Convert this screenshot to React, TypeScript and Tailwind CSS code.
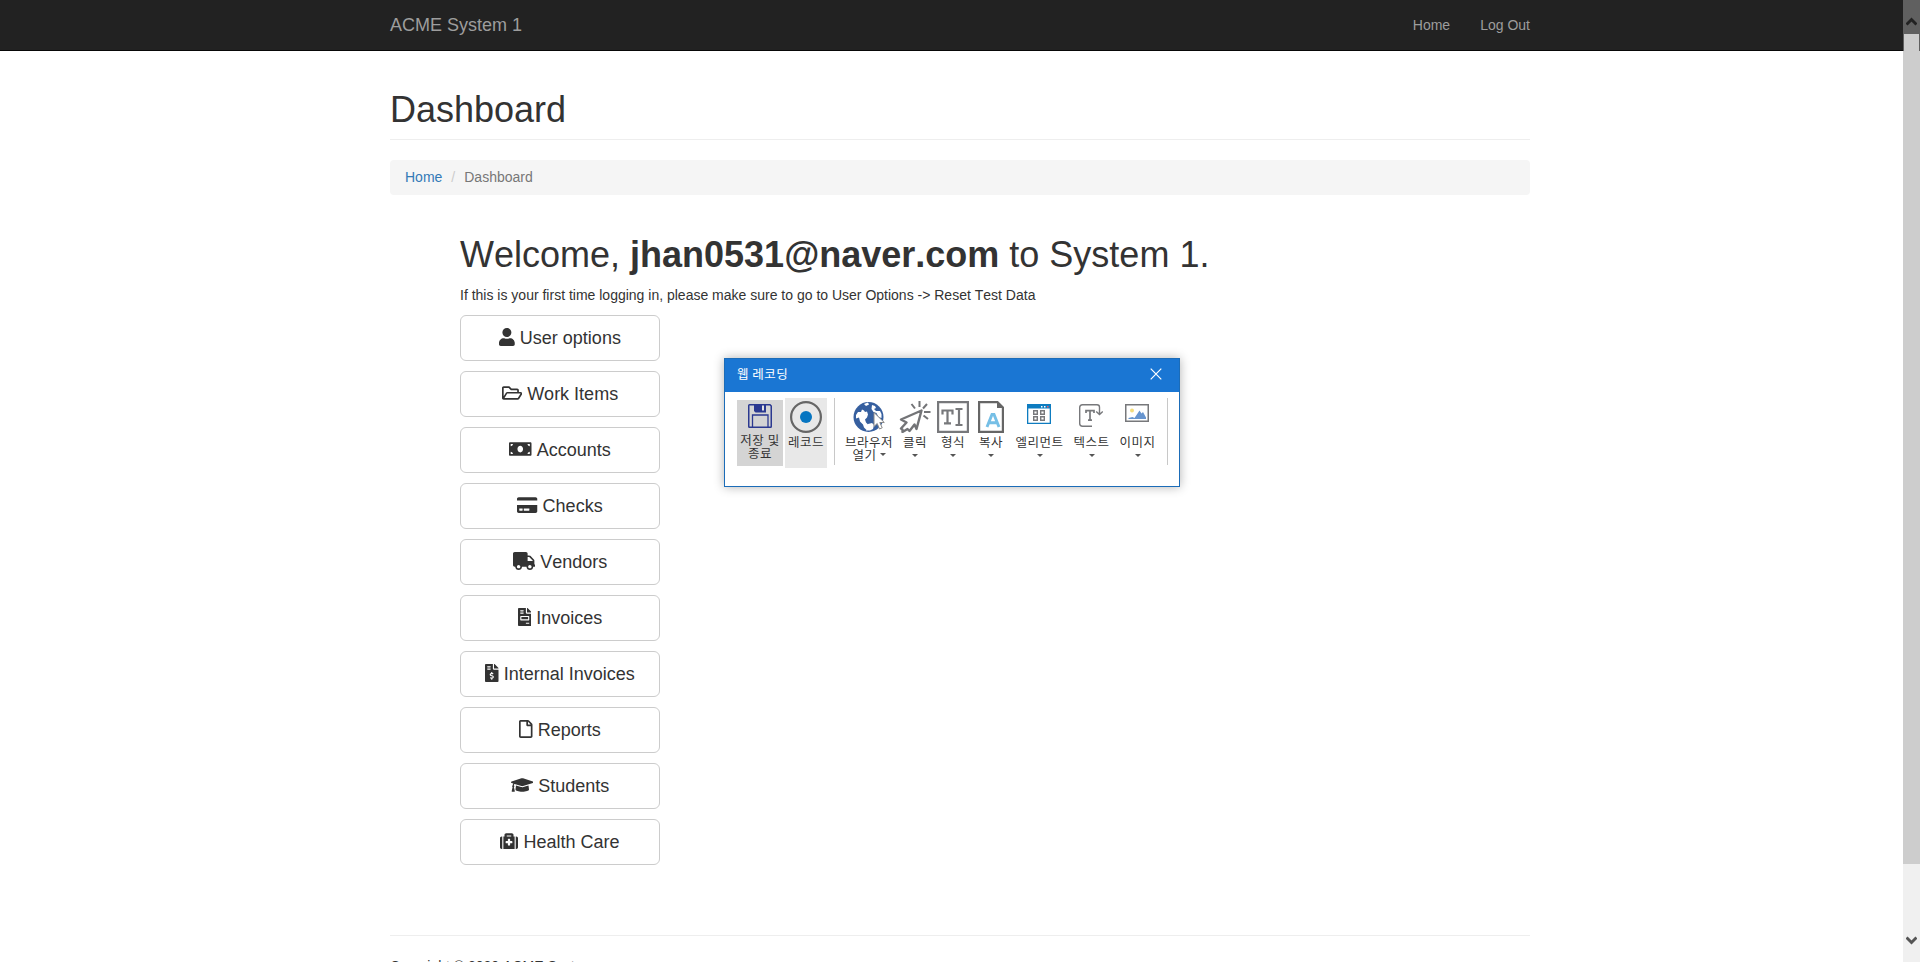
import React from "react";
import {
  FaUser, FaRegFolderOpen, FaMoneyBill, FaCreditCard, FaTruck, FaFileInvoice,
  FaFileInvoiceDollar, FaRegFile, FaGraduationCap, FaMedkit,
} from "react-icons/fa";
import type { IconType } from "react-icons";

const menu: { icon: IconType; label: string; w: string }[] = [
  { icon: FaUser, label: "User options", w: "w-[15.75px]" },
  { icon: FaRegFolderOpen, label: "Work Items", w: "w-[20.25px]" },
  { icon: FaMoneyBill, label: "Accounts", w: "w-[22.5px]" },
  { icon: FaCreditCard, label: "Checks", w: "w-[20.25px]" },
  { icon: FaTruck, label: "Vendors", w: "w-[22.5px]" },
  { icon: FaFileInvoice, label: "Invoices", w: "w-[13.5px]" },
  { icon: FaFileInvoiceDollar, label: "Internal Invoices", w: "w-[13.5px]" },
  { icon: FaRegFile, label: "Reports", w: "w-[13.5px]" },
  { icon: FaGraduationCap, label: "Students", w: "w-[22.5px]" },
  { icon: FaMedkit, label: "Health Care", w: "w-[18px]" },
];

const SaveIcon = () => (
  <svg width="24" height="24" viewBox="0 0 24 24" fill="none">
    <path d="M1.5 .75H22l1.250 1.250V22.500q0 .75-.75.75h-21q-.75 0-.75-.75V1.500q0-.75.75-.75z" stroke="#2b3990" strokeWidth="1.500" />
    <path d="M6 0h12v8.500H7.500L6 7z" fill="#2b3990" />
    <path d="M14 1.500h2v5h-2z" fill="#e4e4e4" />
    <path d="M4.500 23.500V11h15.500v12.500" stroke="#2b3990" strokeWidth="1.300" />
  </svg>
);

const RecordIcon = () => (
  <svg width="32" height="32" viewBox="0 0 32 32" fill="none">
    <circle cx="16" cy="16" r="14.900" stroke="#666" strokeWidth="2.200" />
    <circle cx="16" cy="16" r="6" fill="#0675c1" />
  </svg>
);

const BrowserIcon = () => (
  <svg width="32" height="32" viewBox="0 0 32 32" fill="none">
    <circle cx="15.500" cy="16" r="15" fill="#365f9f" />
    <path d="M3 14l2-3 3 0 1-2.500 2 1 1 1.500 2-.5 1 3-1 3-2 2 1 3 2 2 1 3-1 2-2 0-2-2-1-3-3-3-1-4-3 1z" fill="#fff" />
    <path d="M11 3l4-1.500 1 2-3 1.500zM19 4l3 1 1 2-2 1 2 2 4 0 1.500 3v4l-3-1-2-4-3-1-2-3z" fill="#fff" />
    <path d="M15 23l4-1 2 2-1 4-3 1.500-4 0z" fill="#fff" />
    <path d="M21 11.500v14l3.200-3 2.300 5.500 2.700-1.200-2.400-5.300h4.500z" fill="#fff" stroke="#888" strokeWidth="1" />
  </svg>
);

const ClickIcon = () => (
  <svg width="32" height="32" viewBox="0 0 32 32" fill="none" stroke="#737477" strokeWidth="2.400">
    <path d="M22.500 9.500L2 18.500l5.500 3-5.500 6 1.500 1v2.500l5-3 2 2 5-6.500 2 4.500z" strokeLinejoin="round" />
    <path d="M20.500 0v6M12.500 3l3.500 4.500M28 3l-4 4.500M25 11h6.500M24.500 14.500l4.500 3.500" strokeWidth="2" />
  </svg>
);

const TypeIcon = () => (
  <svg width="32" height="32" viewBox="0 0 32 32" fill="none" stroke="#77787b">
    <path d="M1.100 1.100h29.800v29.800H1.100z" strokeWidth="2.200" />
    <path d="M5.500 13.500V9.500h10v4M10.500 9v13M7 22.300h7M18.500 8h7M18.500 24h7M22 8v16" strokeWidth="2.200" />
  </svg>
);

const CopyIcon = () => (
  <svg width="26" height="32" viewBox="0 0 26 32" fill="none">
    <path d="M1.100 1.100H19.500l5.400 5.400v24.400H1.100z" stroke="#666" strokeWidth="2.200" />
    <path d="M19 0l7 7h-7z" fill="#666" />
    <path d="M9 26l5-12.500h2l5 12.500M11 21.700h8.500" stroke="#76bfe6" strokeWidth="2.900" />
  </svg>
);

const ElementIcon = () => (
  <svg width="24" height="20" viewBox="0 0 24 20" fill="none">
    <path d="M.65.650h22.700v18.700H.650z" stroke="#0e7cc0" strokeWidth="1.300" />
    <path d="M0 0h24v4.500H0z" fill="#0e7cc0" />
    <path d="M14 2h1.500v1.500H14zM17 2h1.500v1.500H17z" fill="#fff" />
    <path d="M20 2h1.500v1.500H20z" fill="#ee5a6a" />
    <path d="M6.700 6.700h3.600v3.600H6.700zM13.700 6.700h3.600v3.600h-3.600zM6.700 12.700h3.600v3.600H6.700zM13.700 12.700h3.600v3.600h-3.600z" stroke="#77787b" strokeWidth="1.400" />
  </svg>
);

const TextIcon = () => (
  <svg width="24" height="24" viewBox="0 0 24 24" fill="none" stroke="#77787b">
    <path d="M13 22.300H3.500Q.7 22.300.7 19.500v-16Q.7.700 3.500.700h14.500q2.500 0 2.500 2.500V10M17.200 7.500l3.300 3 3.300-3" strokeWidth="1.400" />
    <path d="M7 9V6.700h8V9M11 6.500V16M9 16.200h4" strokeWidth="1.700" />
  </svg>
);

const ImageIcon = () => (
  <svg width="24" height="18" viewBox="0 0 24 18" fill="none">
    <path d="M.75.750h22.500v16.500H.750z" stroke="#77787b" strokeWidth="1.500" />
    <circle cx="7" cy="6.500" r="2" fill="#f4dc7d" />
    <path d="M3.500 15v-1l4-1 2 1 5-7.500 2 3 1.500-1.500 3 5.500V15z" fill="#6795cf" />
  </svg>
);

const Caret = () => (
  <svg width="6" height="3" viewBox="0 0 6 3"><path d="M0 0h6L3 3z" fill="#555" /></svg>
);

const tools = [
  { icon: <ClickIcon />, label: "클릭", w: "w-[38px]", pad: "" },
  { icon: <TypeIcon />, label: "형식", w: "w-[38px]", pad: "" },
  { icon: <CopyIcon />, label: "복사", w: "w-[38px]", pad: "" },
  { icon: <ElementIcon />, label: "엘리먼트", w: "w-[59px]", pad: "pt-[3px] pr-[2px]" },
  { icon: <TextIcon />, label: "텍스트", w: "w-[45px]", pad: "pt-[3px] pr-[2px]" },
  { icon: <ImageIcon />, label: "이미지", w: "w-[47px]", pad: "pt-[3px] pr-[2px]" },
];

function Recorder() {
  return (
    <div className="absolute left-[724px] top-[358px] flex h-[129px] w-[456px] flex-col border border-[#1b6cb8] bg-white font-['Noto_Sans_CJK_KR',sans-serif] text-[12.5px] tracking-[0.5px] text-[#333] shadow-[0_0_10px_rgba(0,0,0,0.3)]">
      <div className="flex h-[33px] shrink-0 items-center justify-between bg-[#1a76d3] pl-3 pr-[17px] text-white">
        <span className="-mt-[3px] leading-none">웹 레코딩</span>
        <svg width="12" height="12" viewBox="0 0 12 12" className="-mt-1" stroke="#fff" strokeWidth="1.200"><path d="M.7.7l10.600 10.600M11.300.7L.7 11.300" /></svg>
      </div>
      <div className="flex items-start pl-3 pt-1.5 text-center leading-[13px]">
        <div className="mt-0.5 flex h-[66px] w-[46px] flex-col items-center bg-[#d4d4d4] pt-1">
          <SaveIcon />
          <span className="mt-[5px] whitespace-nowrap">저장 및</span>
          <span className="whitespace-nowrap">종료</span>
        </div>
        <div className="ml-0.5 flex h-[70px] w-[42px] flex-col items-center bg-[#e8e8e8] pt-[3px]">
          <RecordIcon />
          <span className="mt-[2px] whitespace-nowrap">레코드</span>
        </div>
        <div className="ml-[7px] h-[67px] w-px bg-[#c8c8c8]" />
        <div className="ml-[9px] flex w-[50px] flex-col items-center pt-[3px]">
          <BrowserIcon />
          <span className="mt-[2px] whitespace-nowrap">브라우저</span>
          <span className="flex items-center gap-[3px]">열기<Caret /></span>
        </div>
        <div className="ml-[2px] flex">
          {tools.map((t) => (
            <div key={t.label} className={`flex flex-col items-center pt-[3px] ${t.w}`}>
              <div className={`flex h-8 ${t.pad}`}>{t.icon}</div>
              <span className="mt-[2px] whitespace-nowrap">{t.label}</span>
              <div className="mt-[6px] flex"><Caret /></div>
            </div>
          ))}
        </div>
        <div className="ml-1.5 h-[67px] w-px bg-[#c8c8c8]" />
      </div>
    </div>
  );
}

function Scrollbar() {
  return (
    <div className="flex h-full w-[17px] shrink-0 flex-col bg-[#f0f0f0]">
      <div className="flex h-[34px] items-start justify-center bg-[#606060] pt-[17px]">
        <svg width="11" height="9" viewBox="0 0 11 9" fill="none" stroke="#222" strokeWidth="3"><path d="M.5 7.500l5-5 5 5" /></svg>
      </div>
      <div className="h-[17px] border-x border-[#606060] bg-[#cdcdcd]" />
      <div className="h-[813px] bg-[#cdcdcd]" />
      <div className="flex flex-1 items-start justify-center pt-[72px]">
        <svg width="11" height="9" viewBox="0 0 11 9" fill="none" stroke="#555" strokeWidth="3"><path d="M.5 1.500l5 5 5-5" /></svg>
      </div>
    </div>
  );
}

export default function App() {
  return (
    <div className="relative flex h-[962px] w-[1920px] overflow-hidden bg-white font-['Liberation_Sans',sans-serif] text-sm leading-5 text-[#333] [font-kerning:none]">
      <div className="flex min-w-0 flex-1 flex-col">
        <nav className="h-[51px] shrink-0 border-b border-[#080808] bg-[#222] text-[#9d9d9d]">
          <div className="ml-[390px] flex w-[1140px] justify-between pt-[15px]">
            <span className="text-lg leading-5">ACME System 1</span>
            <div className="flex gap-[30px]"><span>Home</span><span>Log Out</span></div>
          </div>
        </nav>
        <main className="ml-[390px] w-[1140px]">
          <h1 className="mt-[39px] border-b border-[#eee] pb-[9px] text-4xl leading-[40px]">Dashboard</h1>
          <div className="mt-5 flex h-[35px] items-start rounded bg-[#f5f5f5] px-[15px] pt-[7px] text-[#777]">
            <span className="text-[#337ab7]">Home</span>
            <span className="px-[9px] text-[#ccc]">/</span>
            <span>Dashboard</span>
          </div>
          <section className="ml-[70px] flex flex-col items-start">
            <h1 className="mt-10 text-4xl leading-[40px]">Welcome, <b>jhan0531@naver.com</b> to System 1.</h1>
            <p className="mt-[10px]">If this is your first time logging in, please make sure to go to User Options -&gt; Reset Test Data</p>
            <div className="mt-[10px] flex flex-col gap-[10px]">
              {menu.map(({ icon: Icon, label, w }) => (
                <button key={label} className="h-[46px] w-[200px] rounded-md border border-[#ccc] bg-white text-lg leading-6">
                  <Icon className={`inline-block h-[18px] align-[-2.25px] ${w}`} /> {label}
                </button>
              ))}
            </div>
          </section>
          <hr className="mt-[70px] border-[#eee]" />
          <footer className="mt-5">Copyright © 2020 ACME System</footer>
        </main>
      </div>
      <Scrollbar />
      <Recorder />
    </div>
  );
}
